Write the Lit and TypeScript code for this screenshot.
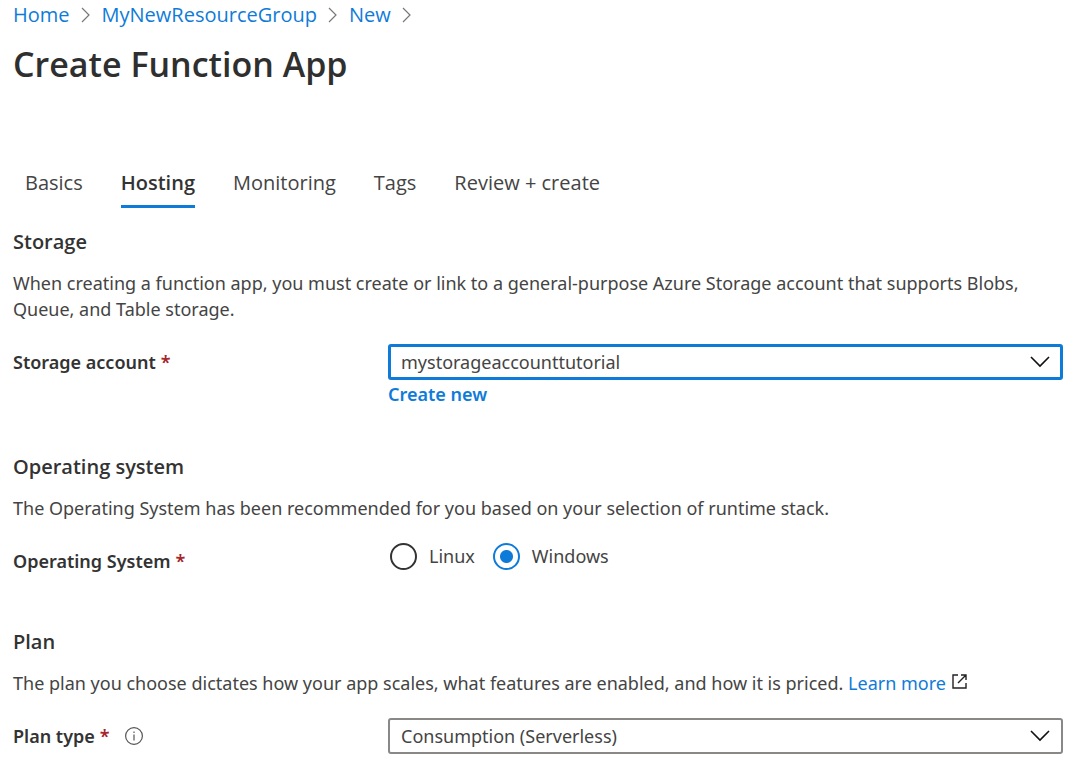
import { LitElement, html, css } from "lit";
import { customElement, state } from "lit/decorators.js";

const separator = html`<svg class="separator" viewBox="0 0 10 16" aria-hidden="true">
  <path d="M1 1 L8 8 L1 15" />
</svg>`;

const chevron = html`<svg class="chevron" viewBox="0 0 20 12" aria-hidden="true">
  <path d="M1 1 L10 10 L19 1" />
</svg>`;

const TABS = ["Basics", "Hosting", "Monitoring", "Tags", "Review + create"];
const SYSTEMS = ["Linux", "Windows"];

@customElement("app-root")
export class AppRoot extends LitElement {
  @state() private tab = "Hosting";
  @state() private system = "Windows";

  static styles = css`
    :host {
      display: block;
      padding: 2px 21px 20px 13px;
      background: #fff;
      color: #444;
      font-family: "Segoe UI", "Noto Sans", "Open Sans", sans-serif;
      font-size: 18px;
      line-height: 26px;
    }
    a {
      color: #0f7bd8;
      text-decoration: none;
    }
    p,
    h1,
    h2 {
      margin: 0;
    }
    .breadcrumb,
    .tabs,
    h1,
    h2 {
      font-family: "Segoe UI", "Open Sans", "Noto Sans", sans-serif;
    }
    .breadcrumb {
      display: flex;
      align-items: center;
      gap: 11px;
      font-size: 20px;
    }
    .separator {
      width: 10px;
      height: 16px;
      fill: none;
      stroke: #777;
      stroke-width: 1.2;
    }
    h1 {
      margin-top: 14px;
      color: #2f2f2f;
      font-size: 34px;
      font-weight: 600;
      line-height: 44px;
    }
    .tabs {
      display: flex;
      gap: 38px;
      margin-top: 84px;
      padding-left: 12px;
    }
    .tab {
      padding: 0 0 9px;
      border: 0;
      border-bottom: 3px solid transparent;
      background: none;
      color: #444;
      font: inherit;
      font-size: 20px;
      cursor: pointer;
    }
    .tab.active {
      border-color: #0f7bd8;
      color: #333;
      font-weight: 600;
    }
    section {
      margin-bottom: 50px;
    }
    section:last-of-type {
      margin-bottom: 0;
    }
    .tabs + section {
      margin-top: 21px;
    }
    h2 {
      margin-bottom: 15px;
      color: #333;
      font-size: 20px;
      font-weight: 600;
      line-height: 26px;
    }
    .field {
      display: grid;
      grid-template-columns: 375px 1fr;
      margin-top: 22px;
    }
    .label {
      display: flex;
      align-items: center;
      gap: 5px;
      height: 36px;
      color: #333;
      font-weight: 600;
    }
    .required {
      color: #a4262c;
    }
    .info {
      width: 20px;
      height: 20px;
      margin-left: 9px;
      fill: none;
      stroke: #555;
      stroke-width: 1.2;
    }
    .picker {
      position: relative;
    }
    select {
      display: block;
      box-sizing: border-box;
      width: 100%;
      height: 36px;
      padding: 0 44px 0 11px;
      appearance: none;
      border: 2px solid #8a8886;
      border-radius: 3px;
      outline: none;
      background: #fff;
      color: #444;
      font: inherit;
    }
    .focused select {
      padding-left: 10px;
      border: 3px solid #0f7bd8;
    }
    .chevron {
      position: absolute;
      top: 12px;
      right: 13px;
      width: 20px;
      height: 12px;
      fill: none;
      stroke: #111;
      stroke-width: 1.6;
      pointer-events: none;
    }
    .create {
      display: block;
      width: fit-content;
      margin-top: 4px;
      font-weight: 600;
      line-height: 20px;
    }
    .radios {
      display: flex;
      align-items: center;
      gap: 18px;
      height: 26px;
      padding-left: 2px;
    }
    .radios label {
      display: flex;
      align-items: center;
      gap: 12px;
    }
    .radios input {
      width: 27px;
      height: 27px;
      margin: 0;
      appearance: none;
      border: 2px solid #333;
      border-radius: 50%;
    }
    .radios input:checked {
      border-color: #0f7bd8;
      background: radial-gradient(circle, #0f7bd8 6px, #fff 7px);
    }
    .external {
      width: 17px;
      height: 17px;
      fill: none;
      stroke: #222;
      stroke-width: 1.4;
    }
  `;

  render() {
    return html`
      <nav class="breadcrumb" aria-label="Breadcrumb">
        <a href="#home">Home</a>${separator}
        <a href="#group">MyNewResourceGroup</a>${separator}
        <a href="#new">New</a>${separator}
      </nav>
      <h1>Create Function App</h1>
      <div class="tabs" role="tablist">
        ${TABS.map(
          (name) => html`<button
            class="tab ${name === this.tab ? "active" : ""}"
            role="tab"
            aria-selected=${name === this.tab}
            @click=${() => (this.tab = name)}
          >${name}</button>`
        )}
      </div>

      <section>
        <h2>Storage</h2>
        <p>
          When creating a function app, you must create or link to a general-purpose Azure Storage
          account that supports Blobs, Queue, and Table storage.
        </p>
        <div class="field">
          <label class="label" for="account">Storage account <span class="required">*</span></label>
          <div>
            <div class="picker focused">
              <select id="account"><option>mystorageaccounttutorial</option></select>
              ${chevron}
            </div>
            <a class="create" href="#create">Create new</a>
          </div>
        </div>
      </section>

      <section>
        <h2>Operating system</h2>
        <p>The Operating System has been recommended for you based on your selection of runtime stack.</p>
        <div class="field">
          <span class="label" id="system-label">Operating System <span class="required">*</span></span>
          <div class="radios" role="radiogroup" aria-labelledby="system-label">
            ${SYSTEMS.map(
              (name) => html`<label>
                <input
                  type="radio"
                  name="system"
                  .checked=${name === this.system}
                  @change=${() => (this.system = name)}
                />${name}</label>`
            )}
          </div>
        </div>
      </section>

      <section>
        <h2>Plan</h2>
        <p>
          The plan you choose dictates how your app scales, what features are enabled, and how it is priced.
          <a href="#learn">Learn more
            <svg class="external" viewBox="0 0 17 17" aria-hidden="true">
              <path d="M7 2 H2 V15 H15 V10 M10 2 H15 V7 M15 2 L7 10" />
            </svg></a>
        </p>
        <div class="field">
          <label class="label" for="plan">Plan type <span class="required">*</span>
            <svg class="info" viewBox="0 0 20 20" aria-hidden="true">
              <circle cx="10" cy="10" r="8.4" />
              <path d="M10 8.5 V14.5 M10 5.5 V7" />
            </svg>
          </label>
          <div class="picker">
            <select id="plan"><option>Consumption (Serverless)</option></select>
            ${chevron}
          </div>
        </div>
      </section>
    `;
  }
}
